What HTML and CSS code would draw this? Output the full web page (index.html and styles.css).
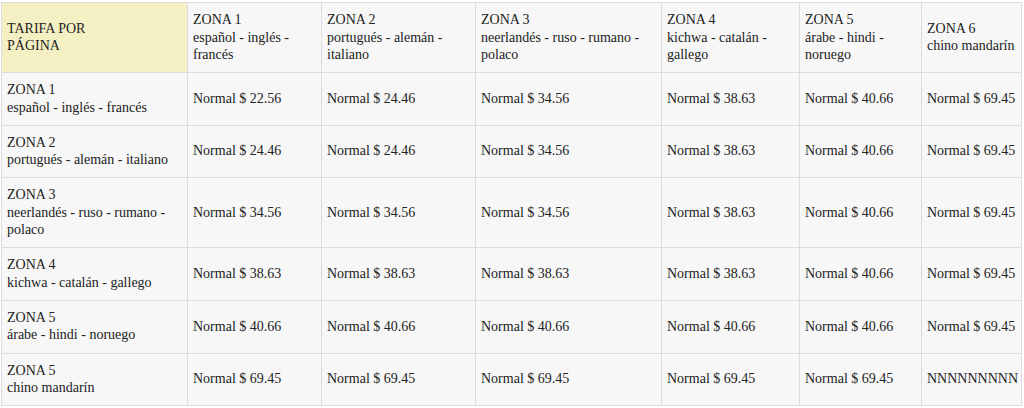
FILE: index.html
```html
<!DOCTYPE html>
<html lang="es">
<head>
<meta charset="utf-8">
<link rel="stylesheet" href="styles.css">
</head>
<body>
<table class="rates">
  <colgroup>
    <col class="c0"><col class="c1"><col class="c2"><col class="c3"><col class="c4"><col class="c5"><col class="c6">
  </colgroup>
  <thead>
    <tr>
      <th class="corner">TARIFA POR<br>PÁGINA</th>
      <th>ZONA 1<br>español - inglés - francés</th>
      <th>ZONA 2<br>portugués - alemán - italiano</th>
      <th>ZONA 3<br>neerlandés - ruso - rumano - polaco</th>
      <th>ZONA 4<br>kichwa - catalán - gallego</th>
      <th>ZONA 5<br>árabe - hindi - noruego</th>
      <th>ZONA 6<br>chino mandarín</th>
    </tr>
  </thead>
  <tbody>
    <tr>
      <td>ZONA 1<br>español - inglés - francés</td>
      <td>Normal $ 22.56</td><td>Normal $ 24.46</td><td>Normal $ 34.56</td><td>Normal $ 38.63</td><td>Normal $ 40.66</td><td>Normal $ 69.45</td>
    </tr>
    <tr>
      <td>ZONA 2<br>portugués - alemán - italiano</td>
      <td>Normal $ 24.46</td><td>Normal $ 24.46</td><td>Normal $ 34.56</td><td>Normal $ 38.63</td><td>Normal $ 40.66</td><td>Normal $ 69.45</td>
    </tr>
    <tr>
      <td>ZONA 3<br>neerlandés - ruso - rumano - polaco</td>
      <td>Normal $ 34.56</td><td>Normal $ 34.56</td><td>Normal $ 34.56</td><td>Normal $ 38.63</td><td>Normal $ 40.66</td><td>Normal $ 69.45</td>
    </tr>
    <tr>
      <td>ZONA 4<br>kichwa - catalán - gallego</td>
      <td>Normal $ 38.63</td><td>Normal $ 38.63</td><td>Normal $ 38.63</td><td>Normal $ 38.63</td><td>Normal $ 40.66</td><td>Normal $ 69.45</td>
    </tr>
    <tr>
      <td>ZONA 5<br>árabe - hindi - noruego</td>
      <td>Normal $ 40.66</td><td>Normal $ 40.66</td><td>Normal $ 40.66</td><td>Normal $ 40.66</td><td>Normal $ 40.66</td><td>Normal $ 69.45</td>
    </tr>
    <tr>
      <td>ZONA 5<br>chino mandarín</td>
      <td>Normal $ 69.45</td><td>Normal $ 69.45</td><td>Normal $ 69.45</td><td>Normal $ 69.45</td><td>Normal $ 69.45</td><td>NNNNNNNNN</td>
    </tr>
  </tbody>
</table>
</body>
</html>
```
FILE: styles.css
```css
html, body {
  margin: 0;
  background: #ffffff;
}
body {
  padding: 2px 0 0 1px;
  font-family: "Liberation Serif", Tinos, "Times New Roman", Times, "Nimbus Roman", "DejaVu Serif", serif;
  font-size: 14px;
  line-height: 17.5px;
  color: #222;
}
.rates {
  border-collapse: collapse;
  table-layout: fixed;
  width: 1020px;
  background: #f7f7f7;
}
.c0 { width: 186px; }
.c1 { width: 134px; }
.c2 { width: 154px; }
.c3 { width: 186px; }
.c4 { width: 138px; }
.c5 { width: 122px; }
.c6 { width: 100px; }
.rates th, .rates td {
  border: 1px solid #dcdcdc;
  padding: 8px 5px 8.6px;
  text-align: left;
  vertical-align: middle;
  font-weight: normal;
  font-family: "Liberation Serif", Tinos, "Times New Roman", Times, "Nimbus Roman", "DejaVu Serif", serif;
}
.rates th.corner {
  background: #f5f0c4;
}
```
